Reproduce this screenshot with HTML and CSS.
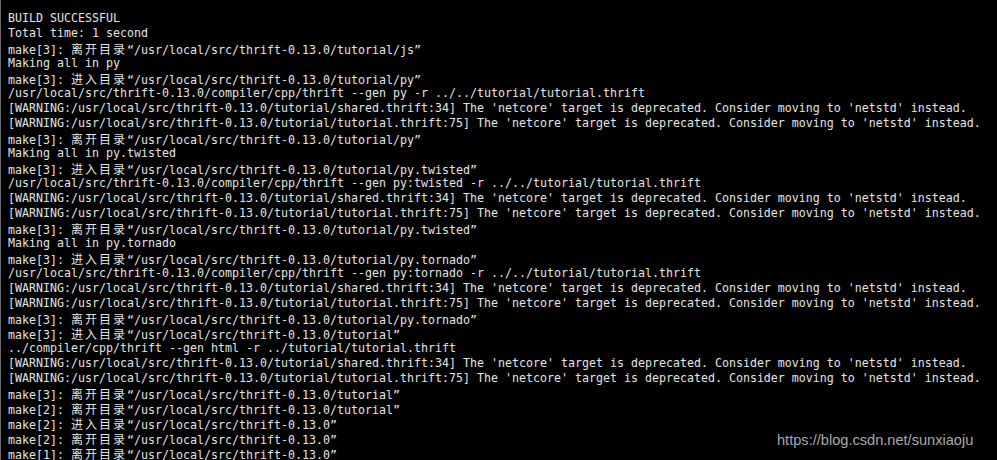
FILE: index.html
```html
<!DOCTYPE html>
<html>
<head>
<meta charset="utf-8">
<link rel="stylesheet" href="styles.css">
</head>
<body>
<div class="term">
<div class="ln">BUILD SUCCESSFUL</div>
<div class="ln">Total time: 1 second</div>
<div class="ln">make[3]: <span class="cj">离开目录</span>“/usr/local/src/thrift-0.13.0/tutorial/js”</div>
<div class="ln">Making all in py</div>
<div class="ln">make[3]: <span class="cj">进入目录</span>“/usr/local/src/thrift-0.13.0/tutorial/py”</div>
<div class="ln">/usr/local/src/thrift-0.13.0/compiler/cpp/thrift --gen py -r ../../tutorial/tutorial.thrift</div>
<div class="ln">[WARNING:/usr/local/src/thrift-0.13.0/tutorial/shared.thrift:34] The 'netcore' target is deprecated. Consider moving to 'netstd' instead.</div>
<div class="ln">[WARNING:/usr/local/src/thrift-0.13.0/tutorial/tutorial.thrift:75] The 'netcore' target is deprecated. Consider moving to 'netstd' instead.</div>
<div class="ln">make[3]: <span class="cj">离开目录</span>“/usr/local/src/thrift-0.13.0/tutorial/py”</div>
<div class="ln">Making all in py.twisted</div>
<div class="ln">make[3]: <span class="cj">进入目录</span>“/usr/local/src/thrift-0.13.0/tutorial/py.twisted”</div>
<div class="ln">/usr/local/src/thrift-0.13.0/compiler/cpp/thrift --gen py:twisted -r ../../tutorial/tutorial.thrift</div>
<div class="ln">[WARNING:/usr/local/src/thrift-0.13.0/tutorial/shared.thrift:34] The 'netcore' target is deprecated. Consider moving to 'netstd' instead.</div>
<div class="ln">[WARNING:/usr/local/src/thrift-0.13.0/tutorial/tutorial.thrift:75] The 'netcore' target is deprecated. Consider moving to 'netstd' instead.</div>
<div class="ln">make[3]: <span class="cj">离开目录</span>“/usr/local/src/thrift-0.13.0/tutorial/py.twisted”</div>
<div class="ln">Making all in py.tornado</div>
<div class="ln">make[3]: <span class="cj">进入目录</span>“/usr/local/src/thrift-0.13.0/tutorial/py.tornado”</div>
<div class="ln">/usr/local/src/thrift-0.13.0/compiler/cpp/thrift --gen py:tornado -r ../../tutorial/tutorial.thrift</div>
<div class="ln">[WARNING:/usr/local/src/thrift-0.13.0/tutorial/shared.thrift:34] The 'netcore' target is deprecated. Consider moving to 'netstd' instead.</div>
<div class="ln">[WARNING:/usr/local/src/thrift-0.13.0/tutorial/tutorial.thrift:75] The 'netcore' target is deprecated. Consider moving to 'netstd' instead.</div>
<div class="ln">make[3]: <span class="cj">离开目录</span>“/usr/local/src/thrift-0.13.0/tutorial/py.tornado”</div>
<div class="ln">make[3]: <span class="cj">进入目录</span>“/usr/local/src/thrift-0.13.0/tutorial”</div>
<div class="ln">../compiler/cpp/thrift --gen html -r ../tutorial/tutorial.thrift</div>
<div class="ln">[WARNING:/usr/local/src/thrift-0.13.0/tutorial/shared.thrift:34] The 'netcore' target is deprecated. Consider moving to 'netstd' instead.</div>
<div class="ln">[WARNING:/usr/local/src/thrift-0.13.0/tutorial/tutorial.thrift:75] The 'netcore' target is deprecated. Consider moving to 'netstd' instead.</div>
<div class="ln">make[3]: <span class="cj">离开目录</span>“/usr/local/src/thrift-0.13.0/tutorial”</div>
<div class="ln">make[2]: <span class="cj">离开目录</span>“/usr/local/src/thrift-0.13.0/tutorial”</div>
<div class="ln">make[2]: <span class="cj">进入目录</span>“/usr/local/src/thrift-0.13.0”</div>
<div class="ln">make[2]: <span class="cj">离开目录</span>“/usr/local/src/thrift-0.13.0”</div>
<div class="ln">make[1]: <span class="cj">离开目录</span>“/usr/local/src/thrift-0.13.0”</div>
<div class="wm">https://blog.csdn.net/sunxiaoju</div>
</div>
</body>
</html>
```
FILE: styles.css
```css
html, body {
  margin: 0;
  padding: 0;
  background: #000;
  height: 100%;
  overflow: hidden;
}
.term {
  position: relative;
  height: 460px;
  box-sizing: border-box;
  padding: 11px 0 0 7px;
  border-left: 1px solid #6a6a6a;
  background: #000;
  color: #e4e4e4;
  font-family: "DejaVu Sans Mono", "Liberation Mono", monospace;
  font-size: 11.63px;
  line-height: 15px;
}
.ln {
  height: 15px;
  white-space: pre;
}
.cj {
  font-family: "Noto Sans CJK SC", sans-serif;
  font-size: 12px;
  letter-spacing: 2px;
  line-height: 15px;
}
.wm {
  position: absolute;
  left: 776px;
  top: 432px;
  font-family: "Liberation Sans", Arial, sans-serif;
  font-size: 14.6px;
  line-height: 17px;
  color: #a9a9a9;
  white-space: nowrap;
}
```
